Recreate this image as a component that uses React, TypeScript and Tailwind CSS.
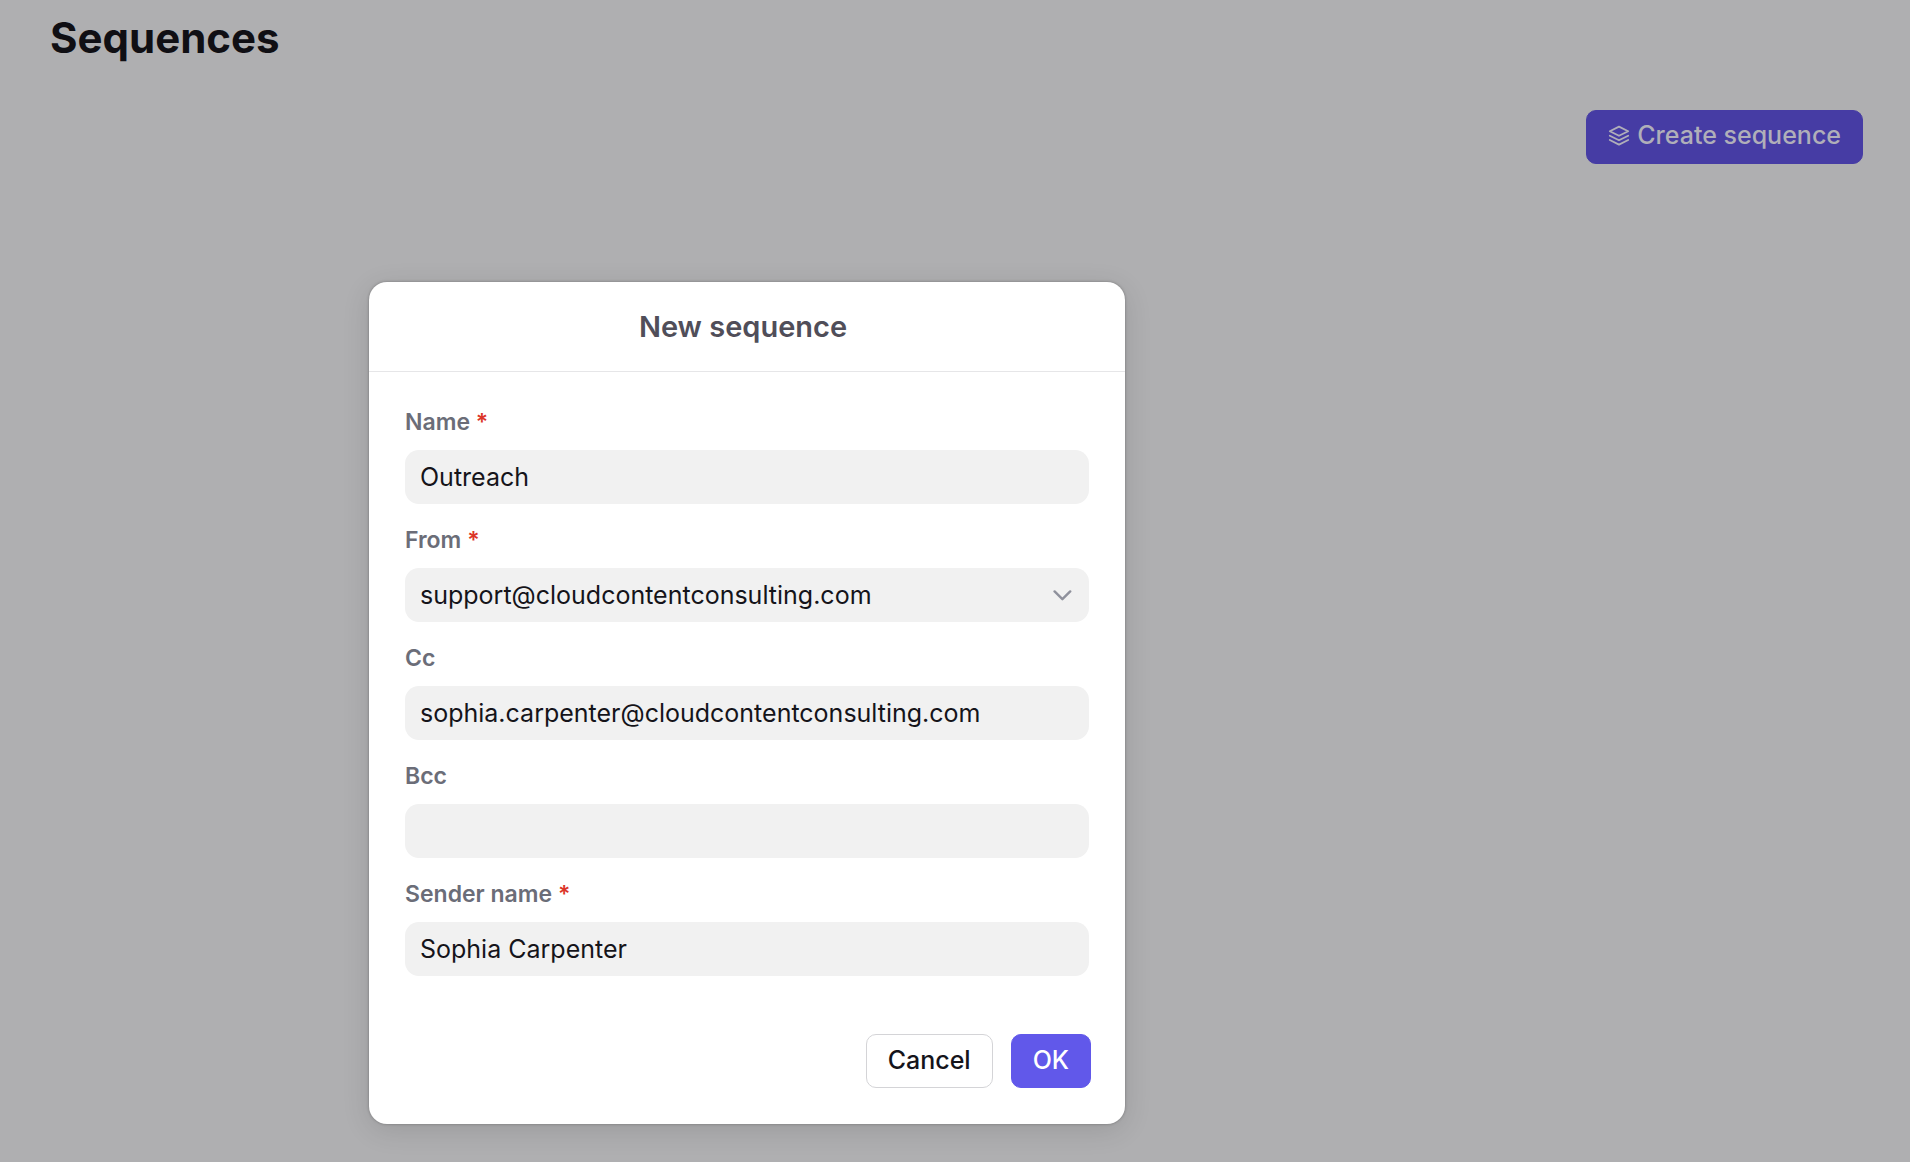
import { useState, type ReactNode } from "react";

function LayersIcon() {
  return (
    <svg viewBox="0 0 22 22" className="size-[22px]" fill="none" stroke="currentColor" strokeWidth="1.8" strokeLinejoin="round" strokeLinecap="round" aria-hidden="true">
      <path d="M11 1.6 L20.2 6.2 L11 10.8 L1.8 6.2 Z" />
      <path d="M1.8 10.7 L11 15.3 L20.2 10.7" />
      <path d="M1.8 15 L11 19.6 L20.2 15" />
    </svg>
  );
}

function Field({ id, label, required, children }: { id: string; label: string; required?: boolean; children: ReactNode }) {
  return (
    <div className="flex flex-col gap-3">
      <label htmlFor={id} className="text-[23px] leading-8 font-semibold text-[#6b6d78]">
        {label}
        {required && <span className="text-[#dc3528]"> *</span>}
      </label>
      {children}
    </div>
  );
}

const control = "h-[54px] w-full appearance-none rounded-[14px] bg-[#f1f1f1] px-[15px] text-[25px] leading-[54px] text-[#15141a] outline-none";

export default function App() {
  const [name, setName] = useState("Outreach");
  const [cc, setCc] = useState("sophia.carpenter@cloudcontentconsulting.com");
  const [bcc, setBcc] = useState("");
  const [sender, setSender] = useState("Sophia Carpenter");

  return (
    <div className="min-h-screen bg-[#afafb1] font-['Inter',sans-serif]">
      <header className="flex flex-col px-[47px] pt-3">
        <h1 className="px-[3px] text-[42px] leading-[52px] font-bold text-[#100f14]">Sequences</h1>
        <button type="button" className="mt-[46px] flex h-[54px] items-center gap-[7px] self-end rounded-[10px] border border-[#463ca4] bg-[#463ca4] px-[21px] pb-0.5 text-[25px] font-medium text-[#b0afb9]">
          <LayersIcon />
          Create sequence
        </button>
      </header>

      <main className="px-[369px] pt-[118px] pb-[38px]">
        <form
          role="dialog"
          aria-labelledby="dialog-title"
          onSubmit={(e) => e.preventDefault()}
          className="w-[756px] rounded-[18px] bg-white shadow-[0_0_3px_rgba(0,0,0,0.3),0_6px_28px_rgba(0,0,0,0.12)]"
        >
          <h2 id="dialog-title" className="border-b border-[#e6e6e8] py-[26px] pr-2 text-center text-[29px] leading-[37px] font-semibold text-[#504e59]">
            New sequence
          </h2>
          <div className="flex flex-col gap-5 px-9 pt-[34px]">
            <Field id="name" label="Name" required>
              <input id="name" value={name} onChange={(e) => setName(e.target.value)} className={control} />
            </Field>
            <Field id="from" label="From" required>
              <div className="relative">
                <select id="from" className={control}>
                  <option>support@cloudcontentconsulting.com</option>
                </select>
                <svg viewBox="0 0 20 12" className="pointer-events-none absolute top-[21px] right-4 h-3 w-5" fill="none" stroke="#8f919c" strokeWidth="2.4" strokeLinecap="round" strokeLinejoin="round" aria-hidden="true">
                  <path d="M1.6 2.4 L9.4 10.2 L17.2 2.4" />
                </svg>
              </div>
            </Field>
            <Field id="cc" label="Cc">
              <input id="cc" value={cc} onChange={(e) => setCc(e.target.value)} className={control} />
            </Field>
            <Field id="bcc" label="Bcc">
              <input id="bcc" value={bcc} onChange={(e) => setBcc(e.target.value)} className={control} />
            </Field>
            <Field id="sender" label="Sender name" required>
              <input id="sender" value={sender} onChange={(e) => setSender(e.target.value)} className={control} />
            </Field>
          </div>
          <div className="flex justify-end gap-[18px] px-[34px] pt-[58px] pb-9 text-[25px] font-medium">
            <button type="button" className="h-[54px] rounded-[10px] border border-[#d4d4d7] bg-white px-[21px] text-[#15141a]">
              Cancel
            </button>
            <button type="submit" className="h-[54px] rounded-[10px] border border-[#6158ea] bg-[#6158ea] px-[21px] text-white">
              OK
            </button>
          </div>
        </form>
      </main>
    </div>
  );
}
